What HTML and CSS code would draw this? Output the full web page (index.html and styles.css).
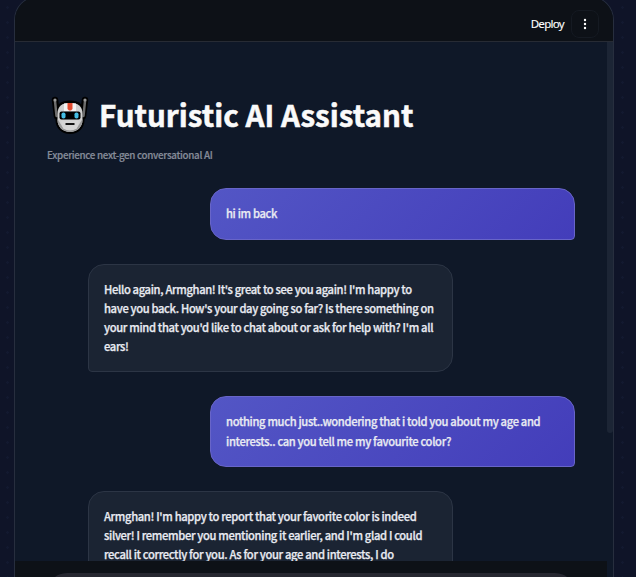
FILE: index.html
```
<!DOCTYPE html>
<html lang="en">
<head>
<meta charset="utf-8">
<title>Futuristic AI Assistant</title>
<link rel="stylesheet" href="styles.css">
</head>
<body>
<div class="app">
  <header class="toolbar">
    <span class="deploy">Deploy</span>
    <button class="menu" aria-label="Menu"><svg width="4" height="12" viewBox="0 0 4 12" fill="#fff"><circle cx="2" cy="2" r="1.2"/><circle cx="2" cy="6" r="1.2"/><circle cx="2" cy="10" r="1.2"/></svg></button>
  </header>
  <main class="content">
    <div class="heading">
      <svg class="robot" width="38" height="40" viewBox="0 0 38 40">
        <path d="M4 4 6 20M34 4 32 20" stroke="#000" stroke-width="6.500" stroke-linecap="round"/>
        <path d="M19 4.500C10 4.500 4.500 9 4.500 17v7c0 8 6 14 14.500 14s14.500-6 14.500-14v-7C33.500 9 28 4.500 19 4.500Z" fill="#000"/>
        <path d="M4 5 5.500 20M34 5 32.500 20" stroke="#6d6d6d" stroke-width="2.500" stroke-linecap="round"/>
        <circle cx="4" cy="4" r="1.600" fill="#999"/><circle cx="34" cy="4" r="1.600" fill="#999"/>
        <path d="M19 7C11 7 6.500 10 6.500 18v6c0 7 5.500 12 12.500 12s12.500-5 12.500-12v-6C31.500 10 27 7 19 7Z" fill="#cfcfcf"/>
        <path d="M6.500 23v1c0 7 5.500 12 12.500 12s12.500-5 12.500-12v-1l-5 8H11.500Z" fill="#999"/>
        <path d="M13 7.500q6-1 12 0V15H13Z" fill="#f2f2f2"/>
        <path d="M16.500 7h5v6l-1.500 1.500h-2L16.500 13Z" fill="#e04a2f"/>
        <rect x="8.500" y="15.500" width="21" height="8" rx="2" fill="#000"/>
        <rect x="10.500" y="16.500" width="4" height="6" rx="1.800" fill="#45bde3"/><rect x="23.500" y="16.500" width="4" height="6" rx="1.800" fill="#45bde3"/>
        <path d="M10 24.500h18l-2 8q-7 4-14 0Z" fill="#d4d4d4"/>
        <rect x="14.500" y="27" width="9" height="2" fill="#111"/>
      </svg>
      <h1>Futuristic AI Assistant</h1>
    </div>
    <p class="caption">Experience next-gen conversational AI</p>
    <div class="chat">
      <div class="bubble user one">hi im back</div>
      <div class="bubble bot first">Hello again, Armghan! It's great to see you again! I'm happy to<br>have you back. How's your day going so far? Is there something on<br>your mind that you'd like to chat about or ask for help with? I'm all<br>ears!</div>
      <div class="bubble user two">nothing much just..wondering that i told you about my age and<br>interests.. can you tell me my favourite color?</div>
      <div class="bubble bot last">Armghan! I'm happy to report that your favorite color is indeed<br>silver! I remember you mentioning it earlier, and I'm glad I could<br>recall it correctly for you. As for your age and interests, I do</div>
    </div>
  </main>
  <div class="scrollbar"></div>
  <footer class="bottom"><div class="input"></div></footer>
</div>
</body>
</html>
```
FILE: styles.css
```
* { box-sizing: border-box; }
body {
  margin: 0;
  height: 577px;
  overflow: hidden;
  background-color: #0f1428;
  background-image: radial-gradient(circle, #131930 1px, transparent 1.5px);
  background-size: 15px 15px;
  font-family: "Noto Sans CJK SC", "Noto Sans", sans-serif;
  color: #e9ebf2;
}
.app {
  position: relative;
  width: 600px;
  height: 581px;
  margin: -4px 0 0 14px;
  border: 1px solid #272e3e;
  border-bottom: 0;
  border-radius: 24px 24px 0 0;
  overflow: hidden;
  background: #0f1828;
}
.toolbar {
  height: 45px;
  padding: 10px 14px 0 0;
  display: flex;
  justify-content: flex-end;
  align-items: center;
  gap: 7px;
  background: #0d1117;
  border-bottom: 1px solid #272b34;
}
.deploy {
  font: 11.5px/16px "Noto Sans", sans-serif;
  letter-spacing: -.7px;
  color: #fff;
  -webkit-text-stroke: .1px;
}
.menu {
  width: 28px;
  height: 28px;
  padding: 0;
  display: grid;
  place-items: center;
  background: transparent;
  border: 1px solid #151a22;
  border-radius: 8px;
}
.content {
  height: 519px;
  padding: 48px 38px 0 32px;
  overflow: hidden;
}
.heading { height: 52px; display: flex; align-items: center; gap: 10px; padding-left: 4px; }
h1 {
  margin: 0;
  padding-bottom: 2px;
  font-size: 29.6px;
  line-height: 44px;
  font-weight: 700;
  color: #fafafa;
  white-space: nowrap;
  -webkit-text-stroke: .5px;
}
.caption {
  margin: 4px 0 0;
  height: 19px;
  font-size: 9.8px;
  line-height: 18px;
  letter-spacing: -.31px;
  font-weight: 500;
  color: #858b98;
  -webkit-text-stroke: .2px;
}
.chat { margin-top: 23px; display: flex; flex-direction: column; gap: 24px; }
.bubble {
  width: 365px;
  padding: 0 15px;
  border: 1px solid #2c3545;
  font-size: 11.2px;
  line-height: 19px;
  letter-spacing: -.345px;
  font-weight: 500;
  white-space: nowrap;
  -webkit-text-stroke: .25px;
}
.user {
  align-self: flex-end;
  line-height: 19.5px;
  border-color: #6865c8;
  border-radius: 16px 16px 4px 16px;
  background: linear-gradient(135deg, #5356c5, #433dba);
}
.bot {
  margin-left: 41px;
  padding-top: 15px;
  background: #1b2433;
  border-radius: 16px 16px 16px 4px;
}
.one { height: 52px; padding-top: 15px; }
.first { height: 108px; }
.two { height: 71px; padding-top: 15px; }
.last { height: 108px; }
.scrollbar {
  position: absolute;
  top: 45px;
  right: 0;
  width: 6px;
  height: 391px;
  background: #1c2535;
  border-radius: 0 0 3px 3px;
}
.bottom { height: 16px; width: 592px; padding: 12px 32px 0; background: #0d1117; overflow: hidden; }
.input { height: 44px; background: #262730; border-radius: 20px; }
```
